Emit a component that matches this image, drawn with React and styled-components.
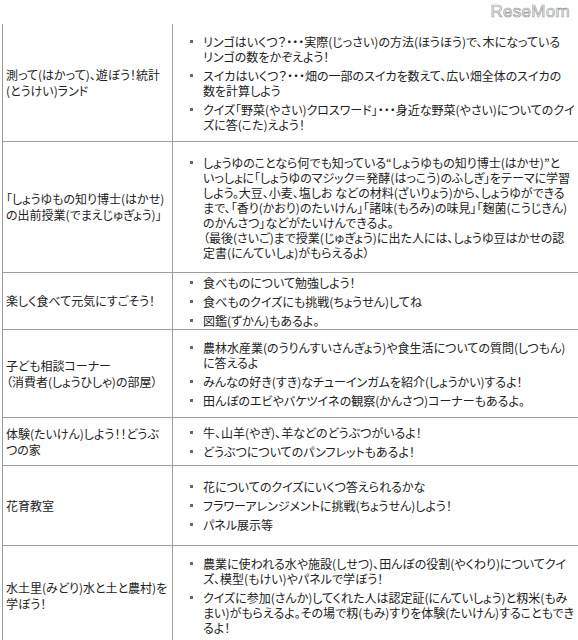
import React from 'react';
import styled, { createGlobalStyle } from 'styled-components';

const GlobalStyle = createGlobalStyle`
  body {
    margin: 0;
    background: #fff;
    font-family: "Noto Sans CJK JP", "Noto Sans", sans-serif;
    color: #222;
  }
`;

const Page = styled.div`
  width: 578px;
  height: 640px;
  overflow: hidden;
`;

const TopBar = styled.div`
  height: 24px;
  display: flex;
  justify-content: flex-end;
  align-items: flex-start;
  padding-right: 8px;
`;

const Logo = styled.div`
  font-family: "Liberation Sans", sans-serif;
  font-size: 17px;
  line-height: 20px;
  margin-top: 2px;
  color: #fff;
  -webkit-text-stroke: 0.7px #9a9a9a;
  letter-spacing: 0.3px;
`;

const Table = styled.div`
  margin-left: 2px;
  width: 575px;
  border-left: 1px solid #9d9d9d;
  border-right: 1px solid #9d9d9d;
`;

const Row = styled.div`
  display: grid;
  grid-template-columns: 170px 1fr;
  height: ${p => p.$h}px;
  border-bottom: 1px solid #9d9d9d;
  box-sizing: border-box;
`;

const Label = styled.div`
  border-right: 1px solid #9d9d9d;
  display: flex;
  align-items: center;
  padding: 0 0 0 3px;
  font-size: 12px;
  line-height: 16px;
  font-feature-settings: "palt";
  white-space: nowrap;
`;

const List = styled.ul`
  list-style: none;
  margin: 0;
  padding: 0 0 0 30px;
  display: flex;
  flex-direction: column;
  justify-content: center;
  gap: 4px;
`;

const Item = styled.li`
  position: relative;
  font-size: 12px;
  line-height: 15px;
  font-feature-settings: "palt";
  white-space: nowrap;

  &::before {
    content: '';
    position: absolute;
    left: -13px;
    top: 6px;
    width: 3px;
    height: 3px;
    background: #666;
  }
`;

const rows = [
  {
    h: 118,
    label: ['測って(はかって)、遊ぼう！統計', '(とうけい)ランド'],
    items: [
      ['リンゴはいくつ？・・・実際(じっさい)の方法(ほうほう)で、木になっている', 'リンゴの数をかぞえよう！'],
      ['スイカはいくつ？・・・畑の一部のスイカを数えて、広い畑全体のスイカの', '数を計算しよう'],
      ['クイズ「野菜(やさい)クロスワード」・・・身近な野菜(やさい)についてのクイ', 'ズに答(こた)えよう！'],
    ],
  },
  {
    h: 131,
    label: ['「しょうゆもの知り博士(はかせ)', 'の出前授業(でまえじゅぎょう)」'],
    items: [
      [
        'しょうゆのことなら何でも知っている“しょうゆもの知り博士(はかせ)”と',
        'いっしょに「しょうゆのマジック＝発酵(はっこう)のふしぎ」をテーマに学習',
        'しよう。大豆、小麦、塩しお などの材料(ざいりょう)から、しょうゆができる',
        'まで、「香り(かおり)のたいけん」「諸味(もろみ)の味見」「麹菌(こうじきん)',
        'のかんさつ」などがたいけんできるよ。',
        '（最後(さいご)まで授業(じゅぎょう)に出た人には、しょうゆ豆はかせの認',
        '定書(にんていしょ)がもらえるよ）',
      ],
    ],
  },
  {
    h: 57,
    label: ['楽しく食べて元気にすごそう！'],
    items: [
      ['食べものについて勉強しよう！'],
      ['食べものクイズにも挑戦(ちょうせん)してね'],
      ['図鑑(ずかん)もあるよ。'],
    ],
  },
  {
    h: 88,
    label: ['子ども相談コーナー', '（消費者(しょうひしゃ)の部屋）'],
    items: [
      ['農林水産業(のうりんすいさんぎょう)や食生活についての質問(しつもん)', 'に答えるよ'],
      ['みんなの好き(すき)なチューインガムを紹介(しょうかい)するよ！'],
      ['田んぼのエビやバケツイネの観察(かんさつ)コーナーもあるよ。'],
    ],
  },
  {
    h: 48,
    label: ['体験(たいけん)しよう！！どうぶ', 'つの家'],
    items: [
      ['牛、山羊(やぎ)、羊などのどうぶつがいるよ！'],
      ['どうぶつについてのパンフレットもあるよ！'],
    ],
  },
  {
    h: 80,
    label: ['花育教室'],
    items: [
      ['花についてのクイズにいくつ答えられるかな'],
      ['フラワーアレンジメントに挑戦(ちょうせん)しよう！'],
      ['パネル展示等'],
    ],
  },
  {
    h: 100,
    label: ['水土里(みどり)水と土と農村)を', '学ぼう！'],
    items: [
      ['農業に使われる水や施設(しせつ)、田んぼの役割(やくわり)についてクイ', 'ズ、模型(もけい)やパネルで学ぼう！'],
      [
        'クイズに参加(さんか)してくれた人は認定証(にんていしょう)と籾米(もみ',
        'まい)がもらえるよ。その場で籾(もみ)すりを体験(たいけん)することもでき',
        'るよ！',
      ],
    ],
  },
];

const Lines = ({ lines }) =>
  lines.map((l, i) => (
    <React.Fragment key={i}>
      {i > 0 && <br />}
      {l}
    </React.Fragment>
  ));

export default function App() {
  return (
    <Page>
      <GlobalStyle />
      <TopBar>
        <Logo>ReseMom</Logo>
      </TopBar>
      <Table>
        {rows.map((r, i) => (
          <Row key={i} $h={r.h}>
            <Label>
              <div><Lines lines={r.label} /></div>
            </Label>
            <List>
              {r.items.map((it, j) => (
                <Item key={j}><Lines lines={it} /></Item>
              ))}
            </List>
          </Row>
        ))}
      </Table>
    </Page>
  );
}
